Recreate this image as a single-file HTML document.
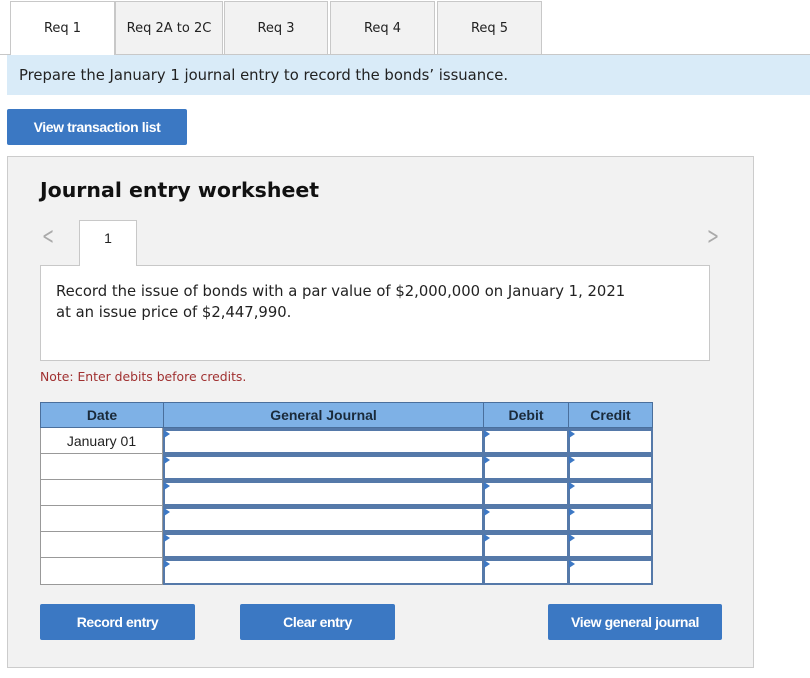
<!DOCTYPE html>
<html><head><style>
*{box-sizing:border-box;margin:0;padding:0}
body{width:810px;height:678px;background:#fff;position:relative;font-family:"DejaVu Sans",Verdana,sans-serif;overflow:hidden}
.a{position:absolute}
.tab{position:absolute;top:1px;height:53px;background:#f2f2f2;border:1px solid #c8c8c8;border-bottom:none;font-size:13px;color:#222;text-align:center;line-height:54px}
.btn{position:absolute;background:#3b78c3;color:#fff;font-family:"Liberation Sans",Arial,sans-serif;font-weight:bold;font-size:14px;text-align:center;border-radius:2px;letter-spacing:-0.4px}
.hd{position:absolute;top:402px;height:26px;background:#7eb1e6;border:1px solid #4a6f9c;font-family:"Liberation Sans",Arial,sans-serif;font-weight:bold;font-size:14px;color:#1a2a3a;text-align:center;line-height:24px}
.dc{position:absolute;left:40px;width:123px;height:26px;background:#fff;border:1px solid #999;border-top:none;font-family:"Liberation Sans",Arial,sans-serif;font-size:14px;text-align:center;line-height:26px;color:#222}
.ic{position:absolute;height:26px;background:#fff;border:2px solid #5579a9;border-top-width:3px}
.ic:before{content:"";position:absolute;left:-1px;top:-1px;border-left:6px solid #3d78c4;border-top:4px solid transparent;border-bottom:4px solid transparent}
</style></head><body>
<div class="a" style="left:0;top:54px;width:810px;height:1px;background:#c8c8c8"></div>
<div class="tab" style="left:10px;width:105px;background:#fff;height:54px">Req 1</div>
<div class="tab" style="left:115px;width:108px">Req 2A to 2C</div>
<div class="tab" style="left:224px;width:104px">Req 3</div>
<div class="tab" style="left:330px;width:105px">Req 4</div>
<div class="tab" style="left:437px;width:105px">Req 5</div>
<div class="a" style="left:7px;top:55px;width:803px;height:40px;background:#d9ebf8;font-size:14.8px;color:#222;line-height:42px;padding-left:12px">Prepare the January 1 journal entry to record the bonds’ issuance.</div>
<div class="btn" style="left:7px;top:109px;width:180px;height:36px;line-height:36px">View transaction list</div>
<div class="a" style="left:7px;top:156px;width:747px;height:512px;background:#f2f2f2;border:1px solid #ccc"></div>
<div class="a" style="left:40px;top:178px;font-size:20.5px;font-weight:bold;color:#111">Journal entry worksheet</div>
<div class="a" style="left:38px;top:222px;font-size:24px;color:#aaa;transform:scaleX(.6)">&lt;</div>
<div class="a" style="left:703px;top:222px;font-size:24px;color:#aaa;transform:scaleX(.6)">&gt;</div>
<div class="a" style="left:40px;top:265px;width:670px;height:96px;background:#fff;border:1px solid #c8c8c8"></div>
<div class="a" style="left:79px;top:220px;width:58px;height:46px;background:#fff;border:1px solid #c8c8c8;border-bottom:none;text-align:center;line-height:34px;font-family:'Liberation Sans',Arial;font-size:14px;color:#222">1</div>
<div class="a" style="left:56px;top:281px;font-size:14.8px;line-height:21px;color:#222">Record the issue of bonds with a par value of $2,000,000 on January 1, 2021<br>at an issue price of $2,447,990.</div>
<div class="a" style="left:40px;top:369px;font-size:12.4px;color:#a03030">Note: Enter debits before credits.</div>
<div class="hd" style="left:40px;width:124px">Date</div>
<div class="hd" style="left:163px;width:321px">General Journal</div>
<div class="hd" style="left:483px;width:86px">Debit</div>
<div class="hd" style="left:568px;width:85px">Credit</div>
<div class="dc" style="top:428px">January 01</div>
<div class="dc" style="top:454px"></div>
<div class="dc" style="top:480px"></div>
<div class="dc" style="top:506px"></div>
<div class="dc" style="top:532px"></div>
<div class="dc" style="top:558px;height:27px"></div>
<div class="ic" style="left:163px;top:428px;width:321px"></div><div class="ic" style="left:483px;top:428px;width:86px"></div><div class="ic" style="left:568px;top:428px;width:85px"></div>
<div class="ic" style="left:163px;top:454px;width:321px"></div><div class="ic" style="left:483px;top:454px;width:86px"></div><div class="ic" style="left:568px;top:454px;width:85px"></div>
<div class="ic" style="left:163px;top:480px;width:321px"></div><div class="ic" style="left:483px;top:480px;width:86px"></div><div class="ic" style="left:568px;top:480px;width:85px"></div>
<div class="ic" style="left:163px;top:506px;width:321px"></div><div class="ic" style="left:483px;top:506px;width:86px"></div><div class="ic" style="left:568px;top:506px;width:85px"></div>
<div class="ic" style="left:163px;top:532px;width:321px"></div><div class="ic" style="left:483px;top:532px;width:86px"></div><div class="ic" style="left:568px;top:532px;width:85px"></div>
<div class="ic" style="left:163px;top:558px;width:321px;height:27px"></div><div class="ic" style="left:483px;top:558px;width:86px;height:27px"></div><div class="ic" style="left:568px;top:558px;width:85px;height:27px"></div>
<div class="btn" style="left:40px;top:604px;width:155px;height:36px;line-height:36px">Record entry</div>
<div class="btn" style="left:240px;top:604px;width:155px;height:36px;line-height:36px">Clear entry</div>
<div class="btn" style="left:548px;top:604px;width:174px;height:36px;line-height:36px">View general journal</div>
</body></html>
